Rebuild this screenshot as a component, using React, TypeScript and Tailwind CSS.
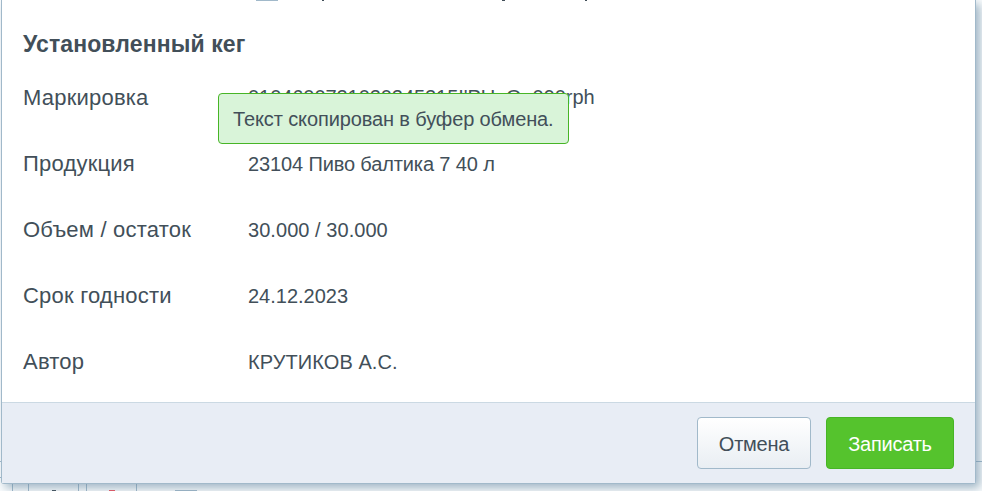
const rows = [
  { label: 'Маркировка', value: "0104600721020245215!'PU, Q, 090rph", fit: 'tracking-[-0.06px]' },
  { label: 'Продукция', value: '23104 Пиво балтика 7 40 л', fit: 'pt-0.5 tracking-[-0.13px]' },
  { label: 'Объем / остаток', value: '30.000 / 30.000', fit: 'pt-0.5 tracking-[0.05px]' },
  { label: 'Срок годности', value: '24.12.2023', fit: 'pt-0.5' },
  { label: 'Автор', value: 'КРУТИКОВ А.С.', fit: 'pt-0.5 tracking-[0.08px]' },
];

function PageBehind() {
  return (
    <div className="absolute inset-0 flex flex-col bg-[#fafcfd]">
      <div className="h-[462px] border-b border-[#a1b9ca]" />
      <div className="h-4 w-3 border-b border-[#a1b9ca]" />
      <div className="flex flex-1">
        <div className="w-[13px] border-r border-[#a1b9ca]" />
        <div className="ml-[15px] flex w-[51px] items-end justify-center border-x border-[#a1b9ca]">
          <div className="h-px w-1 bg-[#404c55]" />
        </div>
        <div className="ml-[7px] flex w-[51px] items-end justify-center border-x border-[#a1b9ca]">
          <div className="h-px w-1.5 bg-[#f0525f]" />
        </div>
        <div className="ml-[38px] h-px w-[22px] self-end bg-[#a1b9ca]" />
      </div>
    </div>
  );
}

export default function App() {
  return (
    <div className="relative h-[491px] w-[982px] overflow-hidden bg-white font-['Liberation_Sans',Arial,sans-serif] text-[#424f59]">
      <PageBehind />
      <section className="relative ml-px flex h-[484px] w-[975px] flex-col rounded-b-[3px] border-x border-b border-[#a1b9ca] bg-white shadow-[4px_4px_10px_rgba(100,135,160,0.6)]">
        <div className="flex h-px">
          <div className="ml-[254px] w-[22px] bg-[#a1b9ca]" />
          <div className="ml-[44px] w-[2px] bg-[#424f59]" />
          <div className="ml-[178px] w-[3px] bg-[#424f59]" />
          <div className="ml-[80px] w-[2px] bg-[#424f59]" />
        </div>
        <h2 className="mt-[27px] pl-[21px] text-[23px] leading-8 font-bold tracking-[0.12px]">Установленный кег</h2>
        <dl className="mt-1 flex-1">
          {rows.map((row) => (
            <div key={row.label} className="flex h-[66px] items-center pl-[21px] whitespace-nowrap">
              <dt className="w-[225px] text-[22px] tracking-[0.21px]">{row.label}</dt>
              <dd className={`text-[20px] ${row.fit}`}>{row.value}</dd>
            </div>
          ))}
        </dl>
        <footer className="flex h-[81px] items-center justify-end gap-[15px] border-t border-[#cbd9e3] bg-[#e8edf5] pr-[21px] text-[20px] tracking-[-0.25px]">
          <button className="h-[52px] w-[114px] rounded-[4px] border border-[#a1b9ca] bg-linear-to-b from-white to-[#e9eef3] pt-0.5">Отмена</button>
          <button className="h-[52px] w-[128px] rounded-[4px] border border-[#47b526] bg-[#55c32d] pt-0.5 text-white">Записать</button>
        </footer>
      </section>
      <div role="status" className="absolute top-[93px] left-[218px] flex h-[51px] w-[351px] items-center rounded-[4px] border border-[#47b526] bg-[#d9f4d9] pl-[14px] text-[20px] tracking-[-0.12px] whitespace-nowrap">
        Текст скопирован в буфер обмена.
      </div>
    </div>
  );
}
